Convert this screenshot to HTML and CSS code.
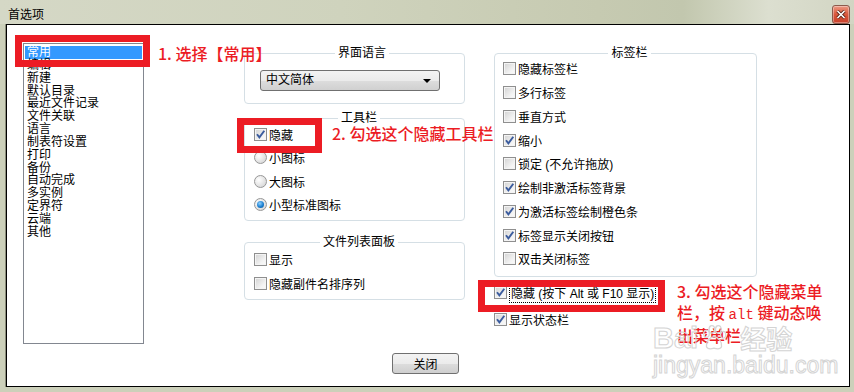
FILE: index.html
```html
<!DOCTYPE html>
<html>
  <head>
    <meta charset="utf-8">
    <link rel="stylesheet" href="styles.css">
  </head>
  <body>
    <div class="titlebar">
      <span class="title">首选项</span>
      <span class="close-btn">
        <svg width="10" height="9" viewBox="0 0 10 9"><path d="M1.5 1 L8.5 8 M8.5 1 L1.5 8" stroke="#5a2418" stroke-width="3.2"/><path d="M1.5 1 L8.5 8 M8.5 1 L1.5 8" stroke="#fff" stroke-width="1.6"/></svg>
      </span>
    </div>
    <div class="panel">
      <div class="main">
        <ul class="listbox">
          <li class="selected">常用</li>
          <li>编辑</li>
          <li>新建</li>
          <li>默认目录</li>
          <li>最近文件记录</li>
          <li>文件关联</li>
          <li>语言</li>
          <li>制表符设置</li>
          <li>打印</li>
          <li>备份</li>
          <li>自动完成</li>
          <li>多实例</li>
          <li>定界符</li>
          <li>云端</li>
          <li>其他</li>
        </ul>

        <div class="col col-mid">
          <fieldset class="group group-lang">
            <legend>界面语言</legend>
            <div class="select">中文简体<span class="arrow"></span></div>
          </fieldset>

          <fieldset class="group group-toolbar">
            <legend>工具栏</legend>
            <div class="opts">
              <div class="opt"><span class="cb"><svg width="11" height="11" viewBox="0 0 11 11"><path d="M2 5.2 L4.4 8.4 L9.3 1.8" fill="none" stroke="#3b5c9e" stroke-width="1.9"/></svg></span>隐藏</div>
              <div class="opt"><span class="rb"></span>小图标</div>
              <div class="opt"><span class="rb"></span>大图标</div>
              <div class="opt"><span class="rb on"></span>小型标准图标</div>
            </div>
          </fieldset>

          <fieldset class="group group-files">
            <legend>文件列表面板</legend>
            <div class="opts tall">
              <div class="opt"><span class="cb"></span>显示</div>
              <div class="opt"><span class="cb"></span>隐藏副件名排序列</div>
            </div>
          </fieldset>
        </div>

        <div class="col col-right">
          <fieldset class="group group-tabs">
            <legend>标签栏</legend>
            <div class="opts">
              <div class="opt"><span class="cb"></span>隐藏标签栏</div>
              <div class="opt"><span class="cb"></span>多行标签</div>
              <div class="opt"><span class="cb"></span>垂直方式</div>
              <div class="opt"><span class="cb"><svg width="11" height="11" viewBox="0 0 11 11"><path d="M2 5.2 L4.4 8.4 L9.3 1.8" fill="none" stroke="#3b5c9e" stroke-width="1.9"/></svg></span>缩小</div>
              <div class="opt"><span class="cb"></span>锁定 (不允许拖放)</div>
              <div class="opt"><span class="cb"><svg width="11" height="11" viewBox="0 0 11 11"><path d="M2 5.2 L4.4 8.4 L9.3 1.8" fill="none" stroke="#3b5c9e" stroke-width="1.9"/></svg></span>绘制非激活标签背景</div>
              <div class="opt"><span class="cb"><svg width="11" height="11" viewBox="0 0 11 11"><path d="M2 5.2 L4.4 8.4 L9.3 1.8" fill="none" stroke="#3b5c9e" stroke-width="1.9"/></svg></span>为激活标签绘制橙色条</div>
              <div class="opt"><span class="cb"><svg width="11" height="11" viewBox="0 0 11 11"><path d="M2 5.2 L4.4 8.4 L9.3 1.8" fill="none" stroke="#3b5c9e" stroke-width="1.9"/></svg></span>标签显示关闭按钮</div>
              <div class="opt"><span class="cb"></span>双击关闭标签</div>
            </div>
          </fieldset>

          <div class="extra">
            <div class="opt"><span class="cb"><svg width="11" height="11" viewBox="0 0 11 11"><path d="M2 5.2 L4.4 8.4 L9.3 1.8" fill="none" stroke="#3b5c9e" stroke-width="1.9"/></svg></span><span class="focus">隐藏 (按下 Alt 或 F10 显示)</span></div>
            <div class="opt"><span class="cb"><svg width="11" height="11" viewBox="0 0 11 11"><path d="M2 5.2 L4.4 8.4 L9.3 1.8" fill="none" stroke="#3b5c9e" stroke-width="1.9"/></svg></span>显示状态栏</div>
          </div>
        </div>
      </div>

      <div class="footer">
        <button class="btn">关闭</button>
      </div>

      <!-- annotations drawn over the dialog -->
      <div class="mark mark-1"></div>
      <div class="note note-1">1. 选择【常用】</div>
      <div class="mark mark-2"></div>
      <div class="note note-2">2. 勾选这个隐藏工具栏</div>
      <div class="mark mark-3"></div>
      <div class="note note-3">3. 勾选这个隐藏菜单<br>栏，按 <span class="mono">alt</span> 键动态唤<br>出菜单栏</div>

      <div class="watermark">
        <div class="wm-logo">
          <span>Bai</span>
          <svg width="28" height="26" viewBox="0 0 26 24"><g fill="none" stroke="#d6d6d6" stroke-width="1.2"><ellipse cx="6" cy="8" rx="2.6" ry="3.4"/><ellipse cx="11" cy="4" rx="2.6" ry="3.4"/><ellipse cx="17" cy="4" rx="2.6" ry="3.4"/><ellipse cx="21.5" cy="9" rx="2.4" ry="3.2"/><path d="M13 11 C9 11 5 16 6 20 C7 23 11 22 13 21.5 C15 22 19 23 20 20 C21 16 17 11 13 11 Z"/></g></svg>
          <span class="cn">经验</span>
        </div>
        <div class="wm-url">jingyan.baidu.com</div>
      </div>
    </div>
  </body>
</html>
```

FILE: styles.css
```css
* {
  margin: 0;
  padding: 0;
  box-sizing: border-box;
}

body {
  width: 854px;
  height: 392px;
  overflow: hidden;
  display: flex;
  flex-direction: column;
  background: #ccd0ba;
  font-family: "Liberation Sans", "Noto Sans CJK SC", sans-serif;
  font-size: 12px;
  color: #000;
}

/* window chrome */
.titlebar {
  height: 24px;
  display: flex;
  align-items: center;
  justify-content: space-between;
  padding: 0 4px 0 8px;
  background: linear-gradient(to right, #d5d8c6 0%, #cfd3bd 40%, #c6cab1 70%, #c2c7ae 80%, #dcdfd0 90%, #d2d5c3 100%);
}

.title {
  font-size: 12px;
  margin-top: 2px;
}

.close-btn {
  width: 18px;
  height: 19px;
  margin-top: 4px;
  display: flex;
  align-items: center;
  justify-content: center;
  border: 1px solid #8c5a4c;
  border-radius: 3px;
  background: linear-gradient(#ec9a84, #d9573c 50%, #c8402a);
  box-shadow: inset 0 0 0 1px rgba(255, 255, 255, 0.35);
}

.panel {
  position: relative;
  flex: 1;
  margin: 0 4px 5px 6px;
  display: flex;
  flex-direction: column;
  background: #fff;
  border: 1px solid #000;
  box-shadow: -1px 0 0 #8a8d7a;
}

.main {
  display: flex;
  align-items: flex-start;
  padding: 18px 0 0 16px;
}

/* category list */
.listbox {
  list-style: none;
  width: 121px;
  height: 301px;
  padding: 2px 1px 0;
  border: 1px solid #828790;
}

.listbox li {
  height: 12.85px;
  line-height: 12.85px;
  padding-left: 2px;
  white-space: nowrap;
}

.listbox li.selected {
  background: #3399ff;
  color: #fff;
}

/* option columns */
.col {
  margin-top: 4px;
  display: flex;
  flex-direction: column;
}

.col-mid {
  width: 221px;
  margin-left: 100px;
}

.col-right {
  width: 263px;
  margin-left: 29px;
}

.group {
  min-width: 0;
  border: 1px solid #d5dfe5;
  border-radius: 4px;
}

.group legend {
  margin: 0 auto;
  padding: 0 3px;
  line-height: 12px;
  font-size: 12px;
}

.group-lang {
  padding: 11px 0 12px 15px;
}

.group-toolbar {
  margin-top: 8px;
  padding: 0 0 4px 9px;
}

.group-files {
  margin-top: 15px;
  padding: 0 0 4px 9px;
}

.group-tabs {
  padding: 0 0 5px 8px;
}

.opts {
  margin-top: -1px;
}

.group-tabs .opts {
  margin-top: -2px;
}

.opt {
  height: 23.3px;
  display: flex;
  align-items: center;
  white-space: nowrap;
}

.opts.tall .opt {
  height: 24px;
}

.group-tabs .opt {
  height: 23.75px;
}

.extra {
  margin-top: 4px;
}

.extra .opt {
  height: 24px;
}

.extra .opt + .opt {
  margin-top: 3px;
}

.cb {
  width: 13px;
  height: 13px;
  margin-right: 2px;
  flex: none;
  display: flex;
  align-items: center;
  justify-content: center;
  border: 1px solid #8f8f8f;
  background: linear-gradient(135deg, #d2d2d2, #f4f4f4 70%, #fafafa);
  box-shadow: inset 0 0 0 1px #f4f4f4;
}

.rb {
  width: 13px;
  height: 13px;
  margin-right: 2px;
  flex: none;
  border-radius: 50%;
  border: 1px solid #979797;
  background: radial-gradient(circle at 35% 35%, #ffffff, #e2e2e2 60%, #cfcfcf);
  position: relative;
}

.rb.on::after {
  content: "";
  position: absolute;
  left: 2px;
  top: 2px;
  width: 7px;
  height: 7px;
  border-radius: 50%;
  background: radial-gradient(circle at 40% 35%, #8fd0ff, #1b7fd0 55%, #0b4f8f);
}

.focus {
  outline: 1px dotted #000;
  padding: 1px 1px;
  margin-left: 1px;
}

.select {
  position: relative;
  width: 180px;
  height: 21px;
  padding-left: 5px;
  line-height: 19px;
  border: 1px solid #707070;
  border-radius: 3px;
  background: linear-gradient(#f3f3f3, #ebebeb 50%, #dddddd 51%, #d0d0d0);
}

.arrow {
  position: absolute;
  right: 8px;
  top: 8px;
  border-left: 4px solid transparent;
  border-right: 4px solid transparent;
  border-top: 4px solid #000;
}

.footer {
  margin-top: auto;
  padding: 0 5px 12px 0;
  display: flex;
  justify-content: center;
}

.btn {
  width: 67px;
  height: 21px;
  font-family: "Liberation Sans", "Noto Sans CJK SC", sans-serif;
  font-size: 12px;
  color: #000;
  border: 1px solid #707070;
  border-radius: 3px;
  background: linear-gradient(#f3f3f3, #ebebeb 50%, #dddddd 51%, #cfcfcf);
}

/* red annotations */
.mark {
  position: absolute;
  border: 7px solid #ec1c24;
}

.mark-1 {
  left: 8px;
  top: 10px;
  width: 135px;
  height: 32px;
}

.mark-2 {
  left: 230px;
  top: 93px;
  width: 85px;
  height: 35px;
}

.mark-3 {
  left: 471px;
  top: 255px;
  width: 187px;
  height: 32px;
}

.note {
  position: absolute;
  color: #ec1c24;
  font-family: "Noto Sans CJK SC", sans-serif;
  font-size: 16px;
  font-weight: 500;
  line-height: 20px;
  white-space: nowrap;
}

.note-1 {
  left: 151px;
  top: 18px;
}

.note-2 {
  left: 325px;
  top: 98px;
}

.note-3 {
  left: 670px;
  top: 256px;
  line-height: 20.5px;
}

.mono {
  font-family: "Liberation Mono", monospace;
  font-size: 14px;
}

/* site watermark */
.watermark {
  position: absolute;
  left: 646px;
  top: 298px;
  color: transparent;
  -webkit-text-stroke: 1px #d4d4d4;
}

.wm-logo {
  display: flex;
  align-items: center;
  gap: 2px;
  font-family: "Liberation Sans", sans-serif;
  font-size: 29px;
  font-weight: bold;
  line-height: 30px;
}

.wm-logo .cn {
  font-family: "Noto Sans CJK SC", sans-serif;
  font-size: 26px;
  margin-left: 10px;
}

.wm-url {
  font-family: "Liberation Sans", sans-serif;
  font-size: 23px;
  line-height: 24px;
}
```
